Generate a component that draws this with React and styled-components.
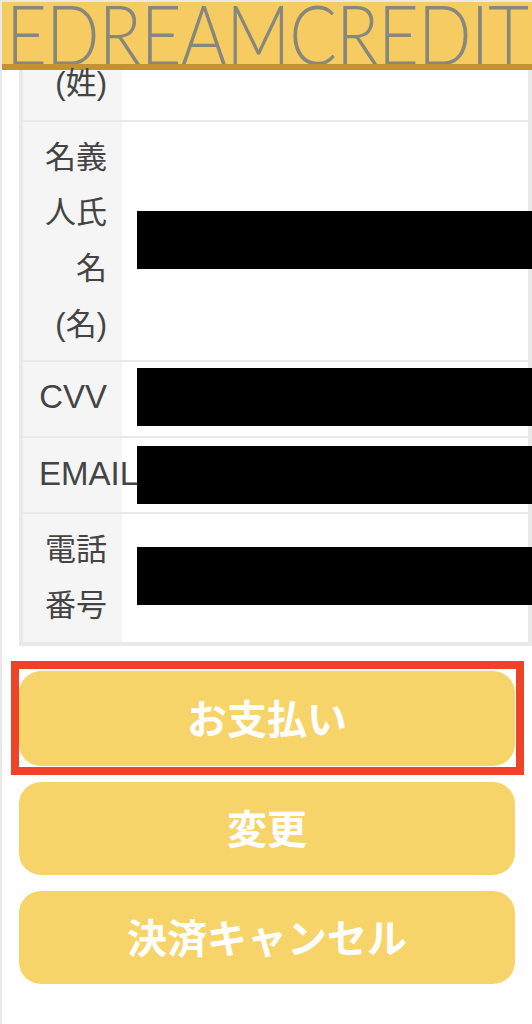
import React from 'react';
import styled, { createGlobalStyle } from 'styled-components';

const GlobalStyle = createGlobalStyle`
  html, body {
    margin: 0;
    padding: 0;
    background: #fff;
  }
  body {
    font-family: "Liberation Sans", "Noto Sans CJK JP", sans-serif;
    overflow: hidden;
  }
`;

const Page = styled.div`
  width: 532px;
  height: 1024px;
  box-sizing: border-box;
  border-left: 2px solid #e9e9e9;
  border-top: 2px solid #e9e9e9;
  overflow: hidden;
`;

const Header = styled.header`
  height: 68px;
  margin-left: -1px;
  box-sizing: border-box;
  background: #f6cb62;
  border-bottom: 6px solid #c09530;
  overflow: hidden;
  white-space: nowrap;
`;

const Logo = styled.div`
  display: inline-block;
  font-family: "Lato", sans-serif;
  font-weight: 300;
  font-size: 82px;
  line-height: 62px;
  margin-left: 5px;
  letter-spacing: -1px;
  color: #87877c;
  transform: scaleX(0.86);
  transform-origin: left center;
`;

const Table = styled.div`
  margin-left: 17px;
  width: 513px;
  box-sizing: border-box;
  border-left: 4px solid #e9e9e9;
  border-right: 4px solid #e9e9e9;
  border-bottom: 4px solid #e9e9e9;
`;

const Row = styled.div`
  display: flex;
  height: ${({ $height }) => $height}px;
  border-bottom: ${({ $last }) => ($last ? 'none' : '2px solid #e9e9e9')};
`;

const Label = styled.div`
  width: 99px;
  flex-shrink: 0;
  box-sizing: border-box;
  padding: 0 15px 0 16px;
  padding-bottom: ${({ $lift }) => $lift || 0}px;
  display: flex;
  align-items: center;
  background: #f5f5f5;
  color: #444;
  font-size: ${({ $latin }) => ($latin ? 33 : 31)}px;
  line-height: 55.7px;
`;

const LabelText = styled.div`
  width: 100%;
  text-align: right;
  word-break: break-all;
  white-space: ${({ $nowrap }) => ($nowrap ? 'nowrap' : 'normal')};
`;

const Value = styled.div`
  flex: 1;
  display: flex;
  align-items: center;
  padding-left: 15px;
  min-width: 0;
`;

const Redacted = styled.div`
  height: 58px;
  width: 400px;
  flex-shrink: 0;
  margin-bottom: ${({ $lift }) => $lift || 0}px;
  background: #000;
`;

const Actions = styled.div`
  display: flex;
  flex-direction: column;
  gap: 16px;
  margin: 25px 0 0 17px;
  width: 496px;
`;

const Button = styled.button`
  position: relative;
  display: block;
  width: 100%;
  height: ${({ $height }) => $height || 93}px;
  padding: 0 0 4px;
  border: none;
  border-radius: 22px;
  background: #f7d469;
  color: #fff;
  font-family: "Noto Sans CJK JP", sans-serif;
  font-weight: 700;
  font-size: 40px;
`;

const Highlight = styled.span`
  position: absolute;
  top: -10px;
  left: -8px;
  width: 513px;
  height: 114px;
  box-sizing: border-box;
  border: 8px solid #ee4327;
  pointer-events: none;
`;

const rows = [
  { height: 50, lines: ['(姓)'], lift: 22 },
  { height: 238, lines: ['名義人氏', '名', '(名)'], barLift: 3 },
  { height: 74, lines: ['CVV'], barLift: 4, lift: 4, latin: true },
  { height: 74, lines: ['EMAIL'], barLift: 0, lift: 2, latin: true, nowrap: true },
  { height: 128, lines: ['電話番号'], barLift: 4, last: true },
];

export default function App() {
  return (
    <>
      <GlobalStyle />
      <Page>
        <Header>
          <Logo>EDREAMCREDIT</Logo>
        </Header>
        <Table>
          {rows.map((row, index) => (
            <Row key={index} $height={row.height} $last={row.last}>
              <Label $lift={row.lift} $latin={row.latin}>
                <LabelText $nowrap={row.nowrap}>
                  {row.lines.map((line) => (
                    <div key={line}>{line}</div>
                  ))}
                </LabelText>
              </Label>
              <Value>{row.barLift !== undefined && <Redacted $lift={row.barLift} />}</Value>
            </Row>
          ))}
        </Table>
        <Actions>
          <Button $height={95}>
            お支払い
            <Highlight />
          </Button>
          <Button>変更</Button>
          <Button>決済キャンセル</Button>
        </Actions>
      </Page>
    </>
  );
}
